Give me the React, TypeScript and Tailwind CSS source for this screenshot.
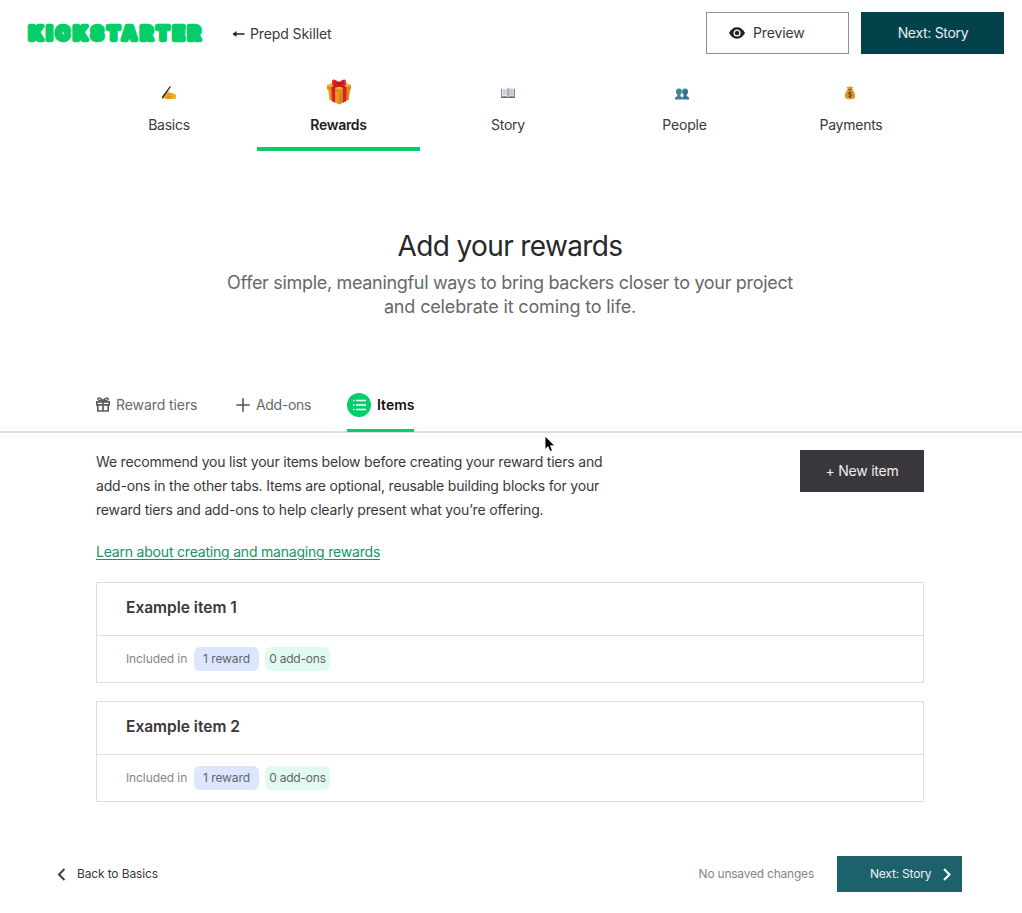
import React from "react";

const WritingHand = () => (
  <svg width="16" height="16" viewBox="0 0 16 16">
    <path d="M1.2 12.2 3 8.9 5.2 7.2 8 6.6 9.5 8l4.3.7 1.2 1.4v3.3l-2.6.6H6l-3.6-.6Z" fill="#f5ad22" />
    <path d="m6 9.3 3 .6M6 11.3l4 .2M9.5 8.2l2 1.3M5.5 13.2h5" stroke="#b97512" strokeWidth=".6" fill="none" />
    <path d="M9.8 1.6 2.6 12l-1.5 1.6.4-2L8.7 1.8Z" fill="#222" stroke="#222" strokeWidth=".5" />
  </svg>
);

const Gift = () => (
  <svg width="26" height="26" viewBox="0 0 26 26">
    <path d="M2 8.5 13 12l11-3.5-1.3 12L13 25.4 3.3 20.5Z" fill="#e99a22" />
    <path d="M13 12v13.4l9.7-4.9 1.3-12Z" fill="#d38718" />
    <path d="M1 5.8 13 2l12 3.8v4.4l-12 4-12-4Z" fill="#f6b43a" />
    <path d="M1 6.5v3.7l12 4 12-4V6.5l-12 4Z" fill="#dc8d1d" />
    <path d="m5.4 7.5 3.7 1.2v15L5.8 22ZM20.6 7.5l-3.7 1.2v15l3.3-1.7Z" fill="#d91f26" />
    <path d="m6 4 13 4M20 4 7 8" stroke="#c9151f" strokeWidth="2.5" />
    <path d="M13 3.8C10 .1 7 .1 6.3 1.2 5.7 3 6.2 6 7.2 6.8c2 .5 4-.3 5.8-1.6 1.8 1.3 3.8 2.1 5.8 1.6 1-.8 1.5-3.8.9-5.6C19 .1 16 .1 13 3.8Z" fill="#e52b31" />
    <path d="m8 2.3 3.4 2.2L8 5.3M18 2.3l-3.4 2.2 3.4.8" stroke="#9e1019" strokeWidth=".9" fill="none" />
    <rect x="11.3" y="2.9" width="3.4" height="3.4" rx="1" fill="#b9141e" />
  </svg>
);

const Book = () => (
  <svg width="14" height="12" viewBox="0 0 14 12">
    <path d="M0 1.8h14v9.1H0Z" fill="#55606d" />
    <path d="M.7 1Q4.5 0 7 1.5v8.7Q4 8.8.7 9.7Z" fill="#f3f4f6" />
    <path d="M13.3 1Q9.5 0 7 1.5v8.7q3-1.4 6.3-.5Z" fill="#dcdfe4" />
    <path d="M2.2 2.4v6M3.7 2.2v6M5.2 2.4v6M8.8 2.4v6M10.3 2.2v6M11.8 2.4v6" stroke="#9fa5ae" strokeWidth=".6" />
    <path d="M7 1.5v9" stroke="#545a64" strokeWidth=".8" />
  </svg>
);

const Busts = () => (
  <svg width="14" height="12" viewBox="0 0 14 12" className="mr-1.5">
    <g fill="#3f829c">
      <ellipse cx="3.9" cy="3.6" rx="2.9" ry="3.2" />
      <path d="M0 11.5V9.4l2.3-1.5V5.8h3.100v2.100L7 9.200v2.300Z" />
    </g>
    <g fill="#34768f">
      <ellipse cx="10.1" cy="3.6" rx="2.9" ry="3.2" />
      <path d="M7.200 11.500V9.200l1.400-1.300V5.800h3.100v2.100L14 9.400v2.100Z" />
    </g>
    <path d="M2.600 2q.8-1 1.800-.8M8.800 2q.8-1 1.800-.8" stroke="#75abc0" strokeWidth=".8" fill="none" />
  </svg>
);

const MoneyBag = () => (
  <svg width="12" height="14" viewBox="0 0 12 14" className="mr-0.5">
    <path d="M2.6.7 4.3 1 6 .4l1.6.6L9.3.6 8 3.8c2.3 1.5 3.2 4.1 3.2 6.3 0 2.4-1.3 3.3-5.2 3.3S.8 12.5.8 10.1C.8 7.9 1.7 5.3 4 3.8Z" fill="#d99a28" />
    <path d="M3.7 3.7h4.6" stroke="#8d5618" strokeWidth="1" />
    <path d="M7.7 6.9C6.8 6 4.5 6.1 4.5 7.4c0 1.4 3.2.8 3.2 2.2 0 1.3-2.4 1.3-3.4.4M6.1 5.5V12" stroke="#54340c" strokeWidth=".9" fill="none" />
  </svg>
);

const steps = [
  { label: "Basics", icon: <WritingHand />, cell: "w-[176px] border-transparent", iconBox: "pt-[6px] h-[47px]", text: "tracking-[-0.25px]" },
  { label: "Rewards", icon: <Gift />, cell: "w-[163px] border-[#05ce68]", iconBox: "pt-[4px] h-[47px]", text: "font-semibold text-[#1c1b1f] tracking-[-0.3px]" },
  { label: "Story", icon: <Book />, cell: "w-[176px] border-transparent", iconBox: "pt-[6px] h-[47px]", text: "tracking-[-0.25px]" },
  { label: "People", icon: <Busts />, cell: "w-[177px] border-transparent", iconBox: "pt-[8px] h-[47px]", text: "tracking-[-0.2px]" },
  { label: "Payments", icon: <MoneyBag />, cell: "w-[156px] border-transparent", iconBox: "pt-[6px] h-[47px]", text: "tracking-[-0.25px]" },
];

function Header() {
  return (
    <header className="flex h-[66px] items-start justify-between pt-3 pr-[18px] pl-[27px]">
      <div className="flex h-[42px] items-center">
        <svg width="176" height="20" viewBox="0 0 176 20" aria-label="Kickstarter">
          <text x="1.9" y="16.7" textLength="171.5" fontFamily="Inter, sans-serif" fontWeight="900" fontSize="18.5" fill="#05ce68" stroke="#05ce68" strokeWidth="4.4" strokeLinejoin="round">KICKSTARTER</text>
        </svg>
        <a className="ml-[29px] flex items-center gap-[5px] pt-0.5">
          <svg width="13" height="10" viewBox="0 0 13 10"><path d="M1.5 5H12.5" stroke="#222" strokeWidth="1.5" /><path d="M.5 5 4.5 2v6Z" fill="#222" /></svg>
          <span className="tracking-[-0.1px]">Prepd Skillet</span>
        </a>
      </div>
      <div className="flex gap-3">
        <button className="flex h-[42px] w-[143px] items-center border border-[#8f8f96] pl-[22px]">
          <svg width="16" height="12" viewBox="0 0 16 12"><path d="M0 6Q3 .3 8 .3T16 6q-3 5.7-8 5.7T0 6Z" fill="#222" /><circle cx="8" cy="6" r="2.9" fill="#222" stroke="#fff" strokeWidth="1.3" /></svg>
          <span className="ml-2 tracking-[-0.15px]">Preview</span>
        </button>
        <button className="h-[42px] w-[143px] bg-[#03424b] pl-px tracking-[-0.3px] text-[#e7eef0]">Next: Story</button>
      </div>
    </header>
  );
}

function ItemCard({ title }: { title: string }) {
  return (
    <article className="border border-[#dcdce3]">
      <h3 className="flex h-[53px] items-center border-b border-[#dcdce3] pb-[3px] pl-[29px] text-[15.5px] font-semibold text-[#39373b]">{title}</h3>
      <div className="flex h-[46px] items-center gap-1.5 pl-[29px] text-xs">
        <span className="w-[62px] tracking-[-0.1px] text-[#858585]">Included in</span>
        <span className="flex h-6 w-[65px] items-center justify-center rounded-md bg-[#dce6ff] tracking-[-0.1px] text-[#656569]">1 reward</span>
        <span className="flex h-6 w-[65px] items-center justify-center rounded-md bg-[#e1faf0] tracking-[-0.2px] text-[#656569]">0 add-ons</span>
      </div>
    </article>
  );
}

export default function App() {
  return (
    <div className="flex h-[913px] w-[1022px] flex-col overflow-hidden bg-white font-['Inter',sans-serif] text-sm leading-6 text-[#39383c]">
      <Header />
      <nav className="flex h-[85px] pl-[81px]">
        {steps.map((s) => (
          <a key={s.label} className={`flex flex-col items-center border-b-4 ${s.cell}`}>
            <span className={`flex items-center ${s.iconBox}`}>{s.icon}</span>
            <span className={s.text}>{s.label}</span>
          </a>
        ))}
      </nav>

      <section className="pt-[77px] pr-0.5 text-center">
        <h1 className="text-[28px] leading-9 tracking-[-0.62px] text-[#282828]">Add your rewards</h1>
        <p className="mt-[7px] text-lg leading-6 text-[#656969]">
          <span className="tracking-[-0.32px]">Offer simple, meaningful ways to bring backers closer to your project</span><br />
          <span className="tracking-[-0.15px]">and celebrate it coming to life.</span>
        </p>
      </section>

      <nav className="mt-[60px] flex h-[54px] border-b-2 border-[#dcdce3] pl-24 text-[#656969]">
        <a className="flex h-[52px] w-[140px] items-center pb-px">
          <svg width="14" height="15" viewBox="0 0 14 15" fill="none" stroke="#5c5c60" strokeWidth="1.7"><path d="M.8 4.8h12.4v3H.8ZM1.8 7.8v6.2h10.4V7.8M7 4.8v9.2" /><path d="M7 3.7C4.5-.2 1.5.6 1.8 2.2c.3 1.4 3 1.5 5.2 1.5Zm0 0C9.5-.2 12.5.6 12.2 2.2c-.3 1.4-3 1.5-5.2 1.5Z" strokeWidth="1.5" /></svg>
          <span className="ml-1.5 tracking-[-0.08px]">Reward tiers</span>
        </a>
        <a className="flex h-[52px] w-[111px] items-center pb-px">
          <svg width="14" height="14" viewBox="0 0 14 14"><path d="M7 .3v13.4M.3 7h13.4" stroke="#57575b" strokeWidth="1.6" /></svg>
          <span className="ml-1.5 tracking-[-0.33px]">Add-ons</span>
        </a>
        <a className="flex h-[53px] w-[67px] items-center border-b-3 border-[#05ce68] pt-px font-semibold text-[#111]">
          <svg width="24" height="24" viewBox="0 0 24 24" className="shrink-0"><circle cx="12" cy="12" r="12" fill="#05ce68" /><path d="M6 7.5h1.5M6 12h1.5M6 16.5h1.5M9 7.5H19M9 12H19M9 16.5H19" stroke="#fff" strokeWidth="1.6" /></svg>
          <span className="ml-1.5">Items</span>
        </a>
      </nav>

      <main className="pt-[17px] pr-[98px] pl-24">
        <div className="flex items-start justify-between">
          <p className="whitespace-nowrap">
            <span className="tracking-[-0.2px]">We recommend you list your items below before creating your reward tiers and</span><br />
            <span className="tracking-[-0.18px]">add-ons in the other tabs. Items are optional, reusable building blocks for your</span><br />
            <span className="tracking-[-0.165px]">reward tiers and add-ons to help clearly present what you’re offering.</span>
          </p>
          <button className="h-[42px] w-[124px] bg-[#39373b] tracking-[-0.25px] text-[#eee]">+ New item</button>
        </div>
        <div className="mt-[18px]">
          <a className="tracking-[-0.2px] text-[#149468] underline underline-offset-2">Learn about creating and managing rewards</a>
        </div>
        <div className="mt-[18px] flex flex-col gap-[18px]">
          <ItemCard title="Example item 1" />
          <ItemCard title="Example item 2" />
        </div>
      </main>

      <footer className="mt-[54px] flex h-9 items-center justify-between pr-[60px] pl-[57px] text-xs">
        <a className="flex items-center gap-[11px]">
          <svg width="9" height="13" viewBox="0 0 9 13"><path d="M7.5 1 2 6.5 7.5 12" fill="none" stroke="#39373b" strokeWidth="1.9" /></svg>
          <span className="tracking-[-0.14px]">Back to Basics</span>
        </a>
        <div className="flex items-center">
          <span className="mr-[23px] tracking-[-0.22px] text-[#858585]">No unsaved changes</span>
          <button className="flex h-9 w-[125px] items-center bg-[#1c616b] pl-[33px] text-[#edf3f4]">
            <span className="w-[73px] text-left tracking-[-0.2px]">Next: Story</span>
            <svg width="8" height="13" viewBox="0 0 8 13"><path d="m1 1 5.500 5.500L1 12" fill="none" stroke="#fff" strokeWidth="2" /></svg>
          </button>
        </div>
      </footer>

      <svg className="pointer-events-none absolute top-[435px] left-[544px]" width="12" height="18" viewBox="0 0 12 18">
        <path d="M1 1v13.500l3-2.800 2 4.800 2.500-1-2-4.700H11Z" fill="#000" stroke="#fff" strokeWidth=".9" />
      </svg>
    </div>
  );
}
